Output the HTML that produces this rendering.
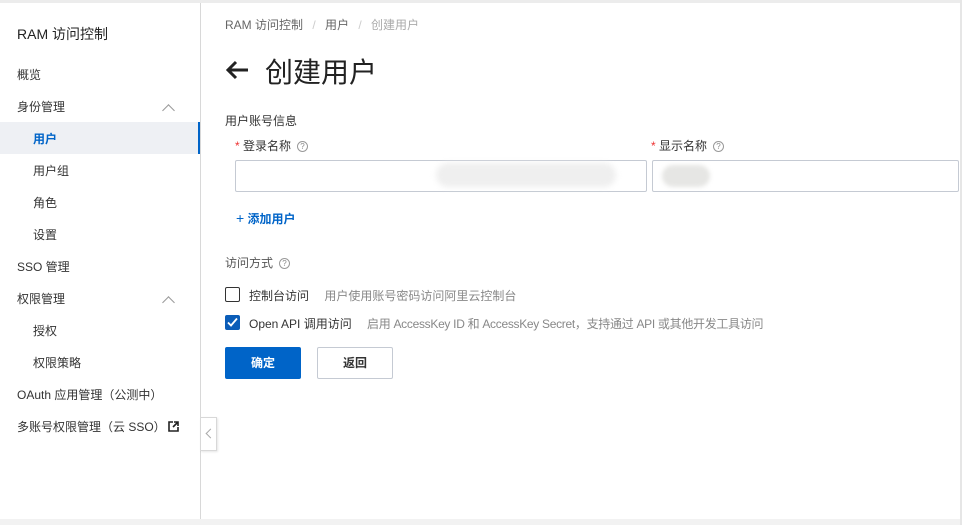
<!DOCTYPE html>
<html><head><meta charset="utf-8"><style>
*{margin:0;padding:0;box-sizing:border-box}
body{width:962px;height:525px;overflow:hidden;background:#fff;font-family:"Liberation Sans","Noto Sans CJK SC",sans-serif;color:#333;position:relative;font-size:12px}
.abs{position:absolute;white-space:nowrap}
.side{position:absolute;left:0;top:3px;width:201px;height:516px;border-right:1px solid #d8d8d8;background:#fff}
.item{position:absolute;left:17px;font-size:12px;color:#333}
.sub{left:33px}
.chev{position:absolute;left:164px;width:9px;height:9px;border-left:1.3px solid #999;border-top:1.3px solid #999;transform:rotate(45deg)}
.inp{position:absolute;height:32px;border:1px solid #c5cad3;border-radius:2px;background:#fff}
.q{display:inline-block;width:11px;height:11px;border:1px solid #999;border-radius:50%;font-size:8px;line-height:9px;text-align:center;color:#888;vertical-align:1px;margin-left:6px}
.cb{position:absolute;width:15px;height:15px;border:1px solid #333;border-radius:2px}
</style></head><body>
<div class="abs" style="left:0;top:0;width:962px;height:3px;background:#ececec"></div>
<div class="abs" style="left:0;top:519px;width:962px;height:6px;background:#f2f2f2"></div>
<div class="abs" style="left:960px;top:0;width:2px;height:525px;background:#e6e6e6"></div>
<div class="side">
<div class="item" style="top:21px;font-size:14px;color:#222">RAM 访问控制</div>
<div class="item" style="top:63px">概览</div>
<div class="item" style="top:95px">身份管理</div><div class="chev" style="top:103px"></div>
<div class="abs" style="left:0;top:119px;width:200px;height:32px;background:#eef0f4;border-right:2px solid #0064c8"></div>
<div class="item sub" style="top:127px;color:#0064c8;font-weight:bold">用户</div>
<div class="item sub" style="top:159px">用户组</div>
<div class="item sub" style="top:191px">角色</div>
<div class="item sub" style="top:223px">设置</div>
<div class="item" style="top:255px">SSO 管理</div>
<div class="item" style="top:287px">权限管理</div><div class="chev" style="top:295px"></div>
<div class="item sub" style="top:319px">授权</div>
<div class="item sub" style="top:351px">权限策略</div>
<div class="item" style="top:383px">OAuth 应用管理（公测中）</div>
<div class="item" style="top:415px">多账号权限管理（云 SSO）<svg width="11" height="11" viewBox="0 0 11 11" style="vertical-align:-1px;margin-left:2px"><path d="M5 1H1v9h9V6" fill="none" stroke="#222" stroke-width="1.6"/><path d="M6 1h4v4M10 1L5 6" fill="none" stroke="#222" stroke-width="1.6"/></svg></div>
</div>
<div class="abs" style="left:200px;top:417px;width:17px;height:34px;border:1px solid #d8d8d8;background:#fff;box-shadow:1px 1px 2px rgba(0,0,0,.1)"><div style="position:absolute;left:6px;top:12px;width:7px;height:7px;border-left:1.3px solid #aaa;border-bottom:1.3px solid #aaa;transform:rotate(45deg)"></div></div>
<div class="abs" style="left:225px;top:16px;color:#666">RAM 访问控制 <span style="color:#ccc;margin:0 6px">/</span> 用户 <span style="color:#ccc;margin:0 6px">/</span> <span style="color:#aaa">创建用户</span></div>
<svg class="abs" style="left:225px;top:60px" width="24" height="20" viewBox="0 0 24 20"><path d="M23 10H3M11 2L3 10l8 8" fill="none" stroke="#222" stroke-width="3"/></svg>
<div class="abs" style="left:265px;top:51px;font-size:28px;color:#222">创建用户</div>
<div class="abs" style="left:225px;top:112px">用户账号信息</div>
<div class="abs" style="left:235px;top:137px"><span style="color:#e33">*</span> 登录名称<span class="q">?</span></div>
<div class="abs" style="left:651px;top:137px"><span style="color:#e33">*</span> 显示名称<span class="q">?</span></div>
<div class="inp" style="left:235px;top:160px;width:412px"></div>
<div class="abs" style="left:436px;top:163px;width:180px;height:24px;background:#efefef;border-radius:12px;filter:blur(3px)"></div>
<div class="inp" style="left:652px;top:160px;width:307px"></div>
<div class="abs" style="left:662px;top:165px;width:48px;height:22px;background:#e6e6e4;border-radius:11px;filter:blur(2px)"></div>
<div class="abs" style="left:236px;top:210px;color:#0064c8;font-weight:bold"><span style="font-weight:normal;font-size:14px">+</span> 添加用户</div>
<div class="abs" style="left:225px;top:254px;color:#555">访问方式<span class="q">?</span></div>
<div class="cb" style="left:225px;top:287px"></div>
<div class="abs" style="left:249px;top:287px">控制台访问 <span style="color:#888;margin-left:12px">用户使用账号密码访问阿里云控制台</span></div>
<div class="cb" style="left:225px;top:315px;background:#0b5db8;border-color:#0b5db8"><svg width="13" height="13" viewBox="0 0 13 13" style="position:absolute;left:0;top:0"><path d="M2 6.5l3 3 6-7" fill="none" stroke="#fff" stroke-width="1.8"/></svg></div>
<div class="abs" style="left:249px;top:315px">Open API 调用访问 <span style="color:#888;margin-left:12px;letter-spacing:-0.3px">启用 AccessKey ID 和 AccessKey Secret，支持通过 API 或其他开发工具访问</span></div>
<div class="abs" style="left:225px;top:347px;width:76px;height:32px;background:#0064c8;border-radius:2px;color:#fff;font-weight:bold;text-align:center;line-height:32px">确定</div>
<div class="abs" style="left:317px;top:347px;width:76px;height:32px;border:1px solid #c5cad3;border-radius:2px;color:#333;font-weight:bold;text-align:center;line-height:30px">返回</div>
</body></html>
